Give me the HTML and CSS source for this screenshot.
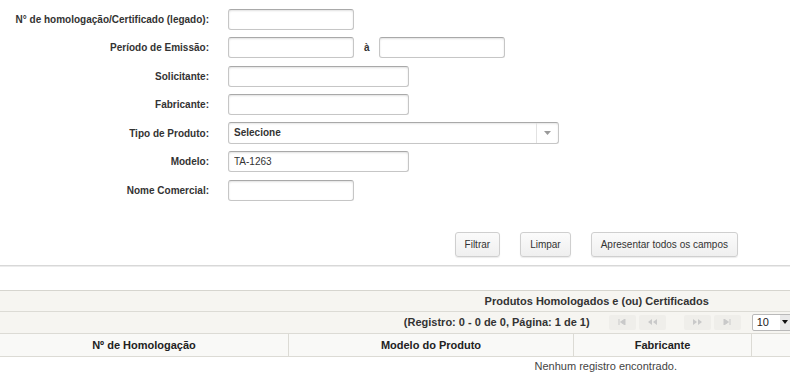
FILE: index.html
```html
<!DOCTYPE html>
<html lang="pt-BR">
<head>
<meta charset="UTF-8">
<meta name="viewport" content="width=device-width, initial-scale=1.0">
<title>Produtos Homologados</title>
<link rel="stylesheet" href="styles.css">
</head>
<body>
<div class="filtro">
  <div class="linha">
    <label>N° de homologação/Certificado (legado):</label>
    <div class="campo"><input type="text" class="txt curto"></div>
  </div>
  <div class="linha">
    <label>Período de Emissão:</label>
    <div class="campo">
      <input type="text" class="txt curto">
      <span class="ate">à</span>
      <input type="text" class="txt curto">
    </div>
  </div>
  <div class="linha">
    <label>Solicitante:</label>
    <div class="campo"><input type="text" class="txt medio"></div>
  </div>
  <div class="linha">
    <label>Fabricante:</label>
    <div class="campo"><input type="text" class="txt medio"></div>
  </div>
  <div class="linha">
    <label>Tipo de Produto:</label>
    <div class="campo">
      <div class="combo">
        <span class="combo-valor">Selecione</span>
        <span class="combo-seta">
          <svg width="7" height="4" viewBox="0 0 7 4"><path d="M0 0h7L3.5 4z" fill="#9a9a9a"/></svg>
        </span>
      </div>
    </div>
  </div>
  <div class="linha">
    <label>Modelo:</label>
    <div class="campo"><input type="text" class="txt medio" value="TA-1263"></div>
  </div>
  <div class="linha">
    <label>Nome Comercial:</label>
    <div class="campo"><input type="text" class="txt curto"></div>
  </div>
</div>

<div class="acoes">
  <button>Filtrar</button>
  <button>Limpar</button>
  <button>Apresentar todos os campos</button>
</div>

<hr class="sep">

<div class="grade">
  <table>
    <tr class="titulo">
      <th colspan="4">Produtos Homologados e (ou) Certificados</th>
    </tr>
    <tr class="paginacao">
      <td colspan="4">
        <div class="pager">
          <span class="pager-info">(Registro: 0 - 0 de 0, Página: 1 de 1)</span>
          <span class="pg-btn">
            <svg width="8" height="6" viewBox="0 0 8 6"><path d="M1 0v6M7 0v6L2.5 3z" stroke="#c9c9c9" fill="#c9c9c9"/></svg>
          </span>
          <span class="pg-btn">
            <svg width="9" height="6" viewBox="0 0 9 6"><path d="M4 0v6L0 3zM9 0v6L5 3z" fill="#c9c9c9"/></svg>
          </span>
          <span class="pg-btn pg-prox">
            <svg width="9" height="6" viewBox="0 0 9 6"><path d="M0 0v6L4 3zM5 0v6L9 3z" fill="#c9c9c9"/></svg>
          </span>
          <span class="pg-btn">
            <svg width="8" height="6" viewBox="0 0 8 6"><path d="M7 0v6M1 0v6L5.5 3z" stroke="#c9c9c9" fill="#c9c9c9"/></svg>
          </span>
          <span class="qtd">
            10
            <span class="qtd-seta">
              <svg width="6" height="4" viewBox="0 0 6 4"><path d="M0 0h6L3 4z" fill="#111"/></svg>
            </span>
          </span>
        </div>
      </td>
    </tr>
    <tr class="cabecalho">
      <th class="c1">Nº de Homologação</th>
      <th class="c2">Modelo do Produto</th>
      <th class="c3">Fabricante</th>
      <th class="c4"></th>
    </tr>
    <tr class="vazio">
      <td colspan="4">Nenhum registro encontrado.</td>
    </tr>
  </table>
</div>
</body>
</html>
```

FILE: styles.css
```css
html, body {
  overflow: hidden;
}
body {
  margin: 0;
  padding: 0;
  font-family: "Liberation Sans", Arial, sans-serif;
  color: #333;
  background: #fff;
}
.filtro {
  padding-top: 5px;
}
.linha {
  display: grid;
  grid-template-columns: 209px 1fr;
  column-gap: 19px;
  align-items: center;
  height: 28.5px;
}
.linha label {
  text-align: right;
  font-size: 10px;
  font-weight: bold;
  color: #333;
}
.campo {
  display: flex;
  align-items: center;
}
.txt {
  box-sizing: border-box;
  height: 21px;
  padding: 0 5px;
  border: 1px solid #c6c6c6;
  border-top-color: #a9a9a9;
  border-radius: 3px;
  box-shadow: inset 0 1px 2px rgba(0, 0, 0, 0.12);
  font-family: inherit;
  font-size: 10px;
  color: #333;
  background: #fff;
}
.curto {
  width: 126px;
}
.medio {
  width: 181px;
}
.ate {
  font-size: 10px;
  font-weight: bold;
  margin: 0 9px 0 10px;
}
.combo {
  box-sizing: border-box;
  width: 331px;
  height: 22px;
  display: flex;
  border: 1px solid #c6c6c6;
  border-top-color: #a9a9a9;
  border-radius: 3px;
  box-shadow: inset 0 1px 2px rgba(0, 0, 0, 0.1);
}
.combo-valor {
  flex: 1;
  padding-left: 5px;
  font-size: 10px;
  font-weight: bold;
  line-height: 19px;
}
.combo-seta {
  width: 21px;
  border-left: 1px solid #e2e2e2;
  display: flex;
  align-items: center;
  justify-content: center;
}
.acoes {
  display: flex;
  justify-content: flex-end;
  gap: 20px;
  padding-right: 52px;
  margin-top: 27px;
}
.acoes button {
  height: 25px;
  padding: 0 9px;
  font-family: inherit;
  font-size: 10px;
  color: #333;
  border: 1px solid #cfcfcf;
  border-radius: 3px;
  background: linear-gradient(#fbfbfb, #efefef);
  box-shadow: 0 1px 1px rgba(0, 0, 0, 0.08);
}
.sep {
  margin: 8px 0 0;
  height: 0;
  border: none;
  border-top: 1px solid #d8d8d8;
  border-bottom: 1px solid #ececec;
}
.grade {
  margin-top: 23px;
  width: 100%;
  overflow: hidden;
}
table {
  width: 1194px;
  border-collapse: collapse;
  font-size: 11px;
}
.titulo th {
  height: 20px;
  padding: 0;
  background: #f6f5f1;
  border-top: 1px solid #d6d5cf;
  border-bottom: 1px solid #dcdbd5;
  color: #333;
}
.paginacao td {
  height: 21px;
  padding: 0;
  background: #f6f5f1;
  border-bottom: 1px solid #dcdbd5;
}
.pager {
  display: flex;
  align-items: center;
  justify-content: center;
  padding-left: 2px;
}
.pager-info {
  font-weight: bold;
  color: #333;
  margin-right: 19px;
}
.pg-btn {
  box-sizing: border-box;
  width: 27px;
  height: 15px;
  margin-right: 3px;
  display: flex;
  align-items: center;
  justify-content: center;
  background: #efeeea;
  border-radius: 2px;
}
.pg-prox {
  margin-left: 15px;
}
.qtd {
  box-sizing: border-box;
  width: 40px;
  height: 17px;
  margin-left: 8px;
  display: flex;
  align-items: center;
  justify-content: space-between;
  padding-left: 4px;
  font-size: 11px;
  color: #222;
  background: #fff;
  border: 1px solid #b9b9b9;
  border-radius: 2px;
}
.qtd-seta {
  width: 11px;
  height: 15px;
  display: flex;
  align-items: center;
  justify-content: center;
  background: #e9e9e9;
}
.cabecalho th {
  height: 22px;
  padding: 0;
  background: #f9f9f7;
  border-bottom: 1px solid #dcdbd5;
  border-right: 1px solid #dcdbd5;
  color: #222;
}
.cabecalho .c1 {
  width: 288px;
}
.cabecalho .c2 {
  width: 284px;
}
.cabecalho .c3 {
  width: 177px;
}
.vazio td {
  height: 18px;
  padding: 0 0 0 18px;
  text-align: center;
  color: #444;
}
```
